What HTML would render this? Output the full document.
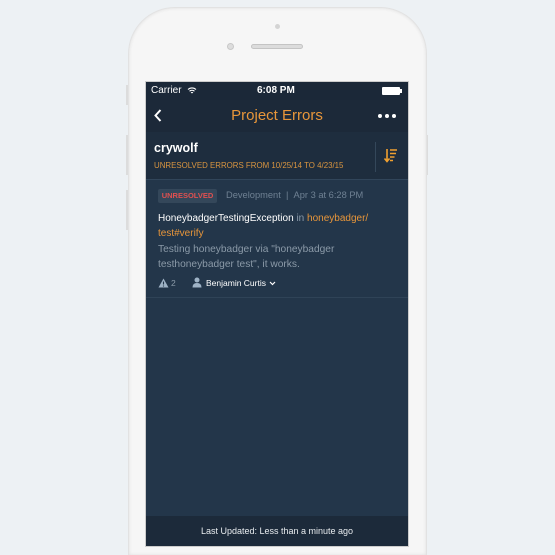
<!DOCTYPE html>
<html><head><meta charset="utf-8"><style>
*{margin:0;padding:0;box-sizing:border-box}
html,body{width:555px;height:555px;overflow:hidden}
body{background:#edf1f4;position:relative;font-family:"Liberation Sans",sans-serif}
.phone{position:absolute;left:129px;top:8px;width:297px;height:547px;background:#f6f6f6;border-radius:46px 46px 0 0;box-shadow:0 0 0 1px #e2e2e2,inset 0 0 3px #ddd}
.btn{position:absolute;background:#dcdcdc;width:3px}
.screen{position:absolute;left:146px;top:82px;width:262px;height:464px;background:#23364a;overflow:hidden;outline:1px solid #ccc}
.sb{height:18px;background:#1b2838;color:#fff;font-size:10px;position:relative}
.nav{height:32px;background:#1c2939;position:relative}
.hdr{height:48px;background:#1e2d3e;position:relative;border-bottom:1px solid #31455a}
.foot{position:absolute;left:0;bottom:0;width:262px;height:30px;background:#1c2a3a;color:#e8ecef;font-size:9px;text-align:center;line-height:30px}
.row{height:118px;border-bottom:1px solid #2f4357;position:relative}
</style></head><body>
<div class="btn" style="left:126px;top:85px;height:20px"></div>
<div class="btn" style="left:126px;top:135px;height:40px"></div>
<div class="btn" style="left:126px;top:190px;height:40px"></div>
<div class="btn" style="left:425px;top:135px;height:40px"></div>
<div class="phone"></div>
<div style="position:absolute;left:275px;top:24px;width:5px;height:5px;border-radius:50%;background:#d4d4d4"></div>
<div style="position:absolute;left:227px;top:43px;width:7px;height:7px;border-radius:50%;background:#ddd;border:1.5px solid #c8c8c8"></div>
<div style="position:absolute;left:251px;top:44px;width:52px;height:5px;border-radius:3px;background:#dcdcdc;border:1px solid #c4c4c4"></div>
<div class="screen">
 <div class="sb"><span style="position:absolute;left:5px;top:3px">Carrier</span>
  <svg style="position:absolute;left:41px;top:4px" width="10" height="9" viewBox="0 0 10 9"><path d="M1 3.5A6 6 0 0 1 9 3.5M2.5 5.2A4 4 0 0 1 7.5 5.2M4 6.8A2 2 0 0 1 6 6.8" stroke="#fff" stroke-width="1.1" fill="none"/></svg>
  <span style="position:absolute;left:111px;top:3px;font-weight:bold">6:08 PM</span>
  <div style="position:absolute;left:236px;top:5px;width:18px;height:8px;background:#fff;border-radius:1px"></div><div style="position:absolute;left:254px;top:7px;width:2px;height:4px;background:#fff"></div>
 </div>
 <div class="nav">
  <svg style="position:absolute;left:8px;top:9px" width="8" height="13"><path d="M6.5 1L1.5 6.5 6.5 12" stroke="#fff" stroke-width="2" fill="none"/></svg>
  <div style="position:absolute;left:0;width:262px;text-align:center;top:7px;color:#e8963a;font-size:15px">Project Errors</div>
  <div style="position:absolute;left:232px;top:14px;color:#fff;font-size:0">
   <span style="display:inline-block;width:4px;height:4px;border-radius:50%;background:#fff;margin-right:3px"></span><span style="display:inline-block;width:4px;height:4px;border-radius:50%;background:#fff;margin-right:3px"></span><span style="display:inline-block;width:4px;height:4px;border-radius:50%;background:#fff"></span></div>
 </div>
 <div class="hdr">
  <div style="position:absolute;left:8px;top:9px;color:#fff;font-weight:bold;font-size:12.5px">crywolf</div>
  <div style="position:absolute;left:8px;top:29px;color:#d99540;font-size:7.9px">UNRESOLVED ERRORS FROM 10/25/14 TO 4/23/15</div>
  <div style="position:absolute;left:229px;top:10px;width:1px;height:30px;background:#34475a"></div>
  <svg style="position:absolute;left:238px;top:16px" width="14" height="16" viewBox="0 0 14 16"><path d="M3 1V13M0.5 10.5L3 13.5 5.5 10.5" stroke="#f0a030" stroke-width="1.6" fill="none"/><path d="M6 2H13M6 5.5H12M6 9H10.5M6 12.5H9" stroke="#f0a030" stroke-width="1.6"/></svg>
 </div>
 <div class="row">
  <div style="position:absolute;left:12px;top:9px;width:59px;height:14px;background:#34475a;border-radius:2px;color:#e05050;font-size:7.5px;font-weight:bold;text-align:center;line-height:14px">UNRESOLVED</div>
  <div style="position:absolute;left:80px;top:10px;color:#6f8193;font-size:9.3px">Development &nbsp;| &nbsp;Apr 3 at 6:28 PM</div>
  <div style="position:absolute;left:12px;top:31px;width:240px;font-size:10px;line-height:15px;color:#fff">HoneybadgerTestingException <span style="color:#8b9bab">in</span> <span style="color:#e8963a">honeybadger/ test#verify</span></div>
  <div style="position:absolute;left:12px;top:62px;width:240px;font-size:10.2px;line-height:15px;color:#8b9aa8">Testing honeybadger via "honeybadger testhoneybadger test", it works.</div>
  <svg style="position:absolute;left:12px;top:98px" width="11" height="10"><path d="M5.5 0.5L10.5 9.5H0.5Z" fill="#9fb3c6"/><path d="M5.5 3.5V6.5M5.5 7.5V8.5" stroke="#23364a" stroke-width="1.1"/></svg>
  <span style="position:absolute;left:25px;top:98px;color:#8b9aa8;font-size:8.5px">2</span>
  <svg style="position:absolute;left:46px;top:97px" width="10" height="11"><circle cx="5" cy="3" r="2.5" fill="#9fb3c6"/><path d="M0.5 10.5Q0.5 6 5 6 9.5 6 9.5 10.5Z" fill="#9fb3c6"/></svg>
  <span style="position:absolute;left:60px;top:98px;color:#fff;font-size:8.5px">Benjamin Curtis</span>
  <svg style="position:absolute;left:123px;top:101px" width="7" height="5"><path d="M1 1L3.5 3.5 6 1" stroke="#fff" stroke-width="1.2" fill="none"/></svg>
 </div>
 <div class="foot">Last Updated: Less than a minute ago</div>
</div>
</body></html>
